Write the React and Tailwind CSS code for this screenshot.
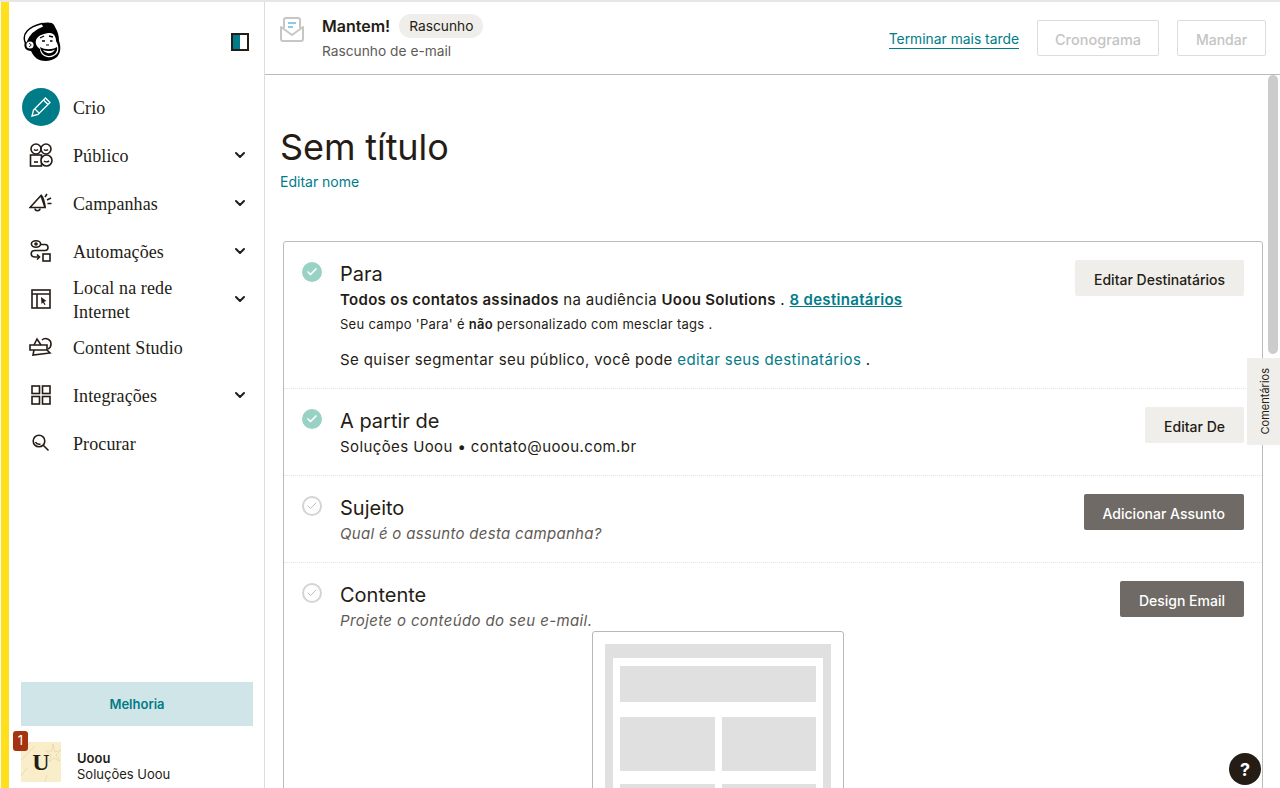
import React from "react";
import { ChevronDown, Check } from "lucide-react";

const ink = "#241c15";

const Freddie = () => (
  <svg width="38" height="40" viewBox="0 0 38 40" fill="none">
    {/* head */}
    <path d="M4 17 C6 10 14 4 21 3 L32 5 C35 10 36 14 36 19 C38 24 38 31 34 35 C28 40 18 40 13 36 C10 33 9 31 8 29 C3 29 0 25 2 20Z" fill="#000" />
    {/* cap band */}
    <path d="M2 20 C-1 12 5 5 19 1.5 L21 5 C13 8 7 13 4.5 20 C4 21.5 3 21.5 2 20Z" fill="#fff" stroke="#000" strokeWidth="1.4" />
    <path d="M19 1 C24 0 30 0 31 3 C33 6 32 8 30 8 C27 6 24 5 21 5Z" fill="#000" />
    {/* ear */}
    <circle cx="7" cy="23" r="3.6" fill="#fff" />
    <path d="M6 21.5 C8.5 21.5 8.5 24.5 6 24.5" stroke="#000" strokeWidth="1" />
    {/* face */}
    <path d="M13 18 C15 13 22 11 27 11 C31 11 33 15 33 19 C35 22 36 26 35 30 C33 34 28 36 24 35 C20 34 17 31 17 27 C14 25 12 22 13 18Z" fill="#fff" />
    <path d="M17 25 C22 28 29 28 34 25 C35 30 31 34 26 34 C21 34 18 30 17 25Z" fill="#000" />
    <path d="M20 28 C24 29.5 28 29.5 32 27.5 C30 32 23 32.5 20 28Z" fill="#fff" />
    <path d="M17 16 L21 14 M26 14 L30 15" stroke="#000" strokeWidth="1.3" />
    <path d="M19 19 h3 M27 19 h2.5" stroke="#000" strokeWidth="1.6" />
    <path d="M23 23 h3" stroke="#000" strokeWidth="1" />
  </svg>
);

const PublicoIcon = () => (
  <svg width="24" height="24" viewBox="0 0 24 24" fill="none" stroke={ink} strokeWidth="1.6">
    <circle cx="7" cy="6" r="5" />
    <circle cx="17" cy="6" r="5" />
    <path d="M5 6.5c1 1 3 1 4 0M15 6.5c1 1 3 1 4 0" />
    <rect x="1.5" y="12" width="11" height="11" fill="#fff" />
    <path d="M5 19h4" />
    <circle cx="17.5" cy="17.5" r="5.5" fill="#fff" />
    <path d="M15 18c1 1 3.5 1 5 0" />
  </svg>
);

const CampanhasIcon = () => (
  <svg width="24" height="20" viewBox="0 0 24 20" fill="none" stroke={ink} strokeWidth="1.6">
    <path d="M1 14.5 L12 2.5 L16 14.5Z" />
    <path d="M12 2.5 C14 3 16 11 16 14.5" />
    <path d="M6 15.5 C6 18.5 11 18.5 11 15.5" />
    <path d="M16 4 L18 1 M18 7 L22 5 M18.5 10.5 L22.5 10.5" />
  </svg>
);

const AutomacoesIcon = () => (
  <svg width="22" height="22" viewBox="0 0 22 22" fill="none" stroke={ink} strokeWidth="1.6">
    <ellipse cx="6" cy="4" rx="4.6" ry="3.2" />
    <circle cx="6" cy="4" r="1" fill={ink} />
    <path d="M11 4.5 H15 C19 4.5 19 10.5 15 10.5 H5 C0 10.5 0 17 5 17 H9" />
    <path d="M7 14.5 L9.5 17 L7 19.5" />
    <rect x="13" y="14" width="7" height="7" />
  </svg>
);

const WebIcon = () => (
  <svg width="20" height="20" viewBox="0 0 20 20" fill="none" stroke={ink} strokeWidth="1.6">
    <rect x="1" y="1" width="18" height="18" />
    <path d="M1 5 H19 M6 5 V19" />
    <path d="M10 8 L15.5 12 L13 12.8 L14.5 15.5 L13.4 16 L12 13.5 L10.5 15Z" fill={ink} stroke="none" />
  </svg>
);

const StudioIcon = () => (
  <svg width="24" height="20" viewBox="0 0 24 20" fill="none" stroke={ink} strokeWidth="1.6">
    <path d="M1 8 H18 V13 H1Z" />
    <path d="M5 8 L8 2 L12 8" />
    <path d="M13 3 C16 0 22 2 22 7 C22 9 21 11 19 12" />
    <path d="M18 13 L21 16 L4 18 L5 13" />
  </svg>
);

const GridIcon = () => (
  <svg width="20" height="20" viewBox="0 0 20 20" fill="none" stroke={ink} strokeWidth="1.6">
    <rect x="1" y="1" width="7.5" height="7.5" />
    <rect x="11.5" y="1" width="7.5" height="7.5" />
    <rect x="1" y="11.5" width="7.5" height="7.5" />
    <rect x="11.5" y="11.5" width="7.5" height="7.5" />
  </svg>
);

const SearchIcon = () => (
  <svg width="18" height="18" viewBox="0 0 18 18" fill="none" stroke={ink} strokeWidth="1.6">
    <circle cx="7" cy="7" r="5.8" />
    <path d="M3.5 8c1 2 3 2.5 5 2M11 11 L16.5 16.5" />
  </svg>
);

const MailIcon = () => (
  <svg width="24" height="26" viewBox="0 0 24 26" fill="none">
    <path d="M4 11 V3 C4 2 5 1 6 1 H18 C19 1 20 2 20 3 V11" stroke="#c6c6c4" strokeWidth="2" />
    <path d="M8 6 H16" stroke="#8fcbe0" strokeWidth="2" />
    <path d="M8 10 H13" stroke="#8fcbe0" strokeWidth="2" />
    <path d="M1 10 V22 C1 23.5 2 24 3 24 H21 C22 24 23 23.5 23 22 V10 L12 18Z" stroke="#c6c6c4" strokeWidth="2" strokeLinejoin="round" />
  </svg>
);

const navItems = [
  { label: "Público", icon: <PublicoIcon />, chevron: true },
  { label: "Campanhas", icon: <CampanhasIcon />, chevron: true },
  { label: "Automações", icon: <AutomacoesIcon />, chevron: true },
  { label: "Local na rede Internet", icon: <WebIcon />, chevron: true },
  { label: "Content Studio", icon: <StudioIcon /> },
  { label: "Integrações", icon: <GridIcon />, chevron: true },
  { label: "Procurar", icon: <SearchIcon /> },
];

const Sidebar = () => (
  <aside className="w-[265px] shrink-0 border-l-[1px] border-l-white flex">
    <div className="w-2 bg-[#ffe01b] shrink-0" />
    <div className="flex-1 flex flex-col border-r border-[#dcdcdc] pb-[6px]">
      <div className="h-[81px] flex items-start justify-between pl-[14px] pr-[15px] pt-[20px]">
        <Freddie />
        <div className="mt-[11px] w-[18px] h-[18px] border-2 border-[#241c15] flex">
          <div className="w-1/2 bg-[#007c89]" />
        </div>
      </div>
      <nav className="flex flex-col font-['Liberation_Serif',serif] text-[18px] tracking-[0.1px] text-[#241c15]">
        <div className="h-[48px] flex items-center pl-[13px]">
          <div className="w-[38px] h-[38px] rounded-full bg-[#007c89] flex items-center justify-center">
            <svg width="22" height="22" viewBox="0 0 22 22" fill="none" stroke="#fff" strokeWidth="1.3">
              <path d="M2 20 L3.5 14 L15.5 2 L20 6.5 L8 18.5Z" />
              <path d="M5 13 L9.5 17.5 M13.5 4 L18 8.5" />
            </svg>
          </div>
          <span className="ml-[13px] pt-[2px]">Crio</span>
        </div>
        {navItems.map((item) => (
          <div key={item.label} className="h-[48px] flex items-center pl-[13px] pr-[16px]">
            <div className="w-[38px] flex justify-center shrink-0">{item.icon}</div>
            <span className="ml-[13px] w-[122px] pt-[2px] leading-[24px]">{item.label}</span>
            {item.chevron && <ChevronDown size={16} strokeWidth={3} className="ml-auto text-[#241c15]" />}
          </div>
        ))}
      </nav>
      <div className="mt-auto ml-[12px] mr-[11px] h-[44px] pt-[2px] bg-[#d0e5e7] flex items-center justify-center text-[13px] font-semibold text-[#007c89]">
        Melhoria
      </div>
      <div className="relative mt-[16px] ml-[12px] flex items-center">
        <div className="relative w-[40px] h-[40px] bg-[#f9eec9] flex items-center justify-center font-['Liberation_Serif',serif] font-bold text-[24px] text-[#241c15]">
          <svg className="absolute inset-0" width="40" height="40" viewBox="0 0 40 40" fill="none" stroke="#e9dcb6" strokeWidth="1">
            <path d="M0 10 L10 0 M0 18 L14 4 M0 34 L6 26" />
            <path d="M32 2 L34 10 L40 8 L35 13 L39 19 L33 16 L28 20 L30 13 L25 9 L31 9Z" />
            <path d="M24 40 L26 33" />
          </svg>
          <span className="relative">U</span>
        </div>
        <div className="absolute left-[-8px] top-[-11px] w-[15px] h-[20px] rounded-[3px] bg-[#a5330f] text-white text-[13px] flex items-center justify-center">1</div>
        <div className="ml-[16px] mt-[8px] text-[13px] leading-[16px] text-[#241c15]">
          <div className="font-semibold">Uoou</div>
          <div>Soluções Uoou</div>
        </div>
      </div>
    </div>
  </aside>
);

const Header = () => (
  <header className="h-[73px] shrink-0 border-b border-[#bbbbbb] flex items-center pl-[15px] pr-[14px]">
    <div className="self-start mt-[15px]"><MailIcon /></div>
    <div className="ml-[18px] self-start mt-[12px]">
      <div className="flex items-center gap-[9px]">
        <span className="text-[16px] font-semibold text-[#241c15]">Mantem!</span>
        <span className="h-[24px] px-[10px] rounded-full bg-[#efeeea] text-[13.75px] flex items-center text-[#241c15]">Rascunho</span>
      </div>
      <div className="mt-[3px] text-[13.75px] text-[#5f5a55]">Rascunho de e-mail</div>
    </div>
    <a className="ml-auto text-[13.85px] text-[#007c89] border-b border-[#007c89] leading-[17px] mt-[4px]">Terminar mais tarde</a>
    <div className="ml-[18px] w-[122px] h-[36px] pt-[3px] border border-[#dcdcdc] rounded-[2px] flex items-center justify-center text-[14.5px] font-medium text-[#c4c4c4]">Cronograma</div>
    <div className="ml-[18px] w-[89px] h-[36px] pt-[3px] border border-[#dcdcdc] rounded-[2px] flex items-center justify-center text-[14px] font-medium text-[#c4c4c4]">Mandar</div>
  </header>
);

const Done = ({ on }) =>
  on ? (
    <div className="mt-[2px] w-5 h-5 rounded-full bg-[#98d2c5] flex items-center justify-center shrink-0">
      <Check size={12} strokeWidth={3.5} color="#fff" />
    </div>
  ) : (
    <div className="mt-[2px] w-5 h-5 rounded-full border-2 border-[#d4d4d4] flex items-center justify-center shrink-0">
      <Check size={12} strokeWidth={2} color="#bdbdbd" />
    </div>
  );

const Row = ({ on, title, button, dark, last, children }) => (
  <section className={`relative pl-[18px] pr-[18px] pt-[18px] flex ${last ? "" : "border-b border-dotted border-[#e4e4e2]"}`}>
    <Done on={on} />
    <div className="ml-[18px] flex-1">
      <h3 className="h-[26px] pt-[1px] text-[20px] leading-[26px] text-[#241c15]">{title}</h3>
      {children}
    </div>
    <div className={`h-[36px] px-[19px] pt-[2px] rounded-[2px] flex items-center text-[14px] font-medium shrink-0 ${dark ? "bg-[#6f6a65] text-white" : "bg-[#efeeea] text-[#241c15]"}`}>
      {button}
    </div>
  </section>
);

const Thumbnail = () => (
  <div className="w-[252px] ml-[252px] -mt-[3px] border border-[#b8b8b8] rounded-[3px] px-[12px] pt-[12px]">
    <div className="bg-[#e0e0e0] px-[8px] pt-[14px]">
      <div className="bg-white px-[7px] pt-[8px] flex flex-col">
        <div className="h-[36px] bg-[#e0e0e0]" />
        <div className="mt-[15px] grid grid-cols-2 gap-[7px]">
          <div className="h-[54px] bg-[#e0e0e0]" />
          <div className="h-[54px] bg-[#e0e0e0]" />
        </div>
        <div className="mt-[13px] grid grid-cols-2 gap-[7px]">
          <div className="h-[54px] bg-[#e0e0e0]" />
          <div className="h-[54px] bg-[#e0e0e0]" />
        </div>
      </div>
    </div>
  </div>
);

const App = () => (
  <div className="relative h-[788px] w-[1280px] overflow-hidden bg-white border-t-2 border-[#e6e6e6] flex font-['Inter',sans-serif] antialiased">
    <Sidebar />
    <main className="flex-1 flex flex-col min-w-0">
      <Header />
      <div className="flex-1 overflow-hidden pl-[18px] pr-[17px]">
        <h1 className="mt-[49px] -ml-[3px] text-[36px] leading-[46px] tracking-[-0.1px] text-[#241c15]">Sem título</h1>
        <a className="block -ml-[3px] mt-[2px] text-[14px] leading-[20px] text-[#007c89]">Editar nome</a>
        <div className="mt-[49px] border border-[#bbbbbb] rounded-t-[3px]">
          <Row on title="Para" button="Editar Destinatários">
            <div className="h-[102px] pt-[2px] tracking-[0.4px]">
              <p className="text-[15px] leading-[24px] tracking-[0.31px] text-[#241c15]">
                <b className="font-semibold">Todos os contatos assinados</b> na audiência <b className="font-semibold">Uoou Solutions</b> . <a className="font-semibold text-[#007c89] underline">8 destinatários</a>
              </p>
              <p className="text-[13px] leading-[24px] tracking-[0.28px] text-[#241c15]">
                Seu campo 'Para' é <b className="font-semibold">não</b> personalizado com mesclar tags .
              </p>
              <p className="mt-[12px] text-[15px] leading-[24px] text-[#241c15]">
                Se quiser segmentar seu público, você pode <a className="text-[#007c89]">editar seus destinatários</a> .
              </p>
            </div>
          </Row>
          <Row on title="A partir de" button="Editar De">
            <p className="h-[42px] pt-[1px] text-[15px] leading-[26px] tracking-[0.4px] text-[#241c15]">Soluções Uoou • contato@uoou.com.br</p>
          </Row>
          <Row title="Sujeito" button="Adicionar Assunto" dark>
            <p className="h-[42px] pt-[1px] text-[15px] leading-[26px] tracking-[0.3px] italic text-[#5f5a55]">Qual é o assunto desta campanha?</p>
          </Row>
          <Row title="Contente" button="Design Email" dark last>
            <p className="pt-[1px] text-[15px] leading-[26px] tracking-[0.38px] italic text-[#5f5a55]">Projete o conteúdo do seu e-mail.</p>
            <Thumbnail />
          </Row>
        </div>
      </div>
    </main>

    <div className="absolute left-[1268px] top-[73px] w-[10px] h-[279px] rounded-full bg-[#cccccc]" />
    <div className="absolute right-0 top-[356px] w-[33px] h-[87px] pl-[3px] bg-[#efeeea] flex items-center justify-center">
      <span className="-rotate-90 whitespace-nowrap text-[11px] text-[#241c15]">Comentários</span>
    </div>
    <div className="absolute left-[1229px] top-[751px] w-[32px] h-[32px] rounded-full bg-[#241c15] flex items-center justify-center text-white font-bold text-[18px]">?</div>
  </div>
);

export default App;
